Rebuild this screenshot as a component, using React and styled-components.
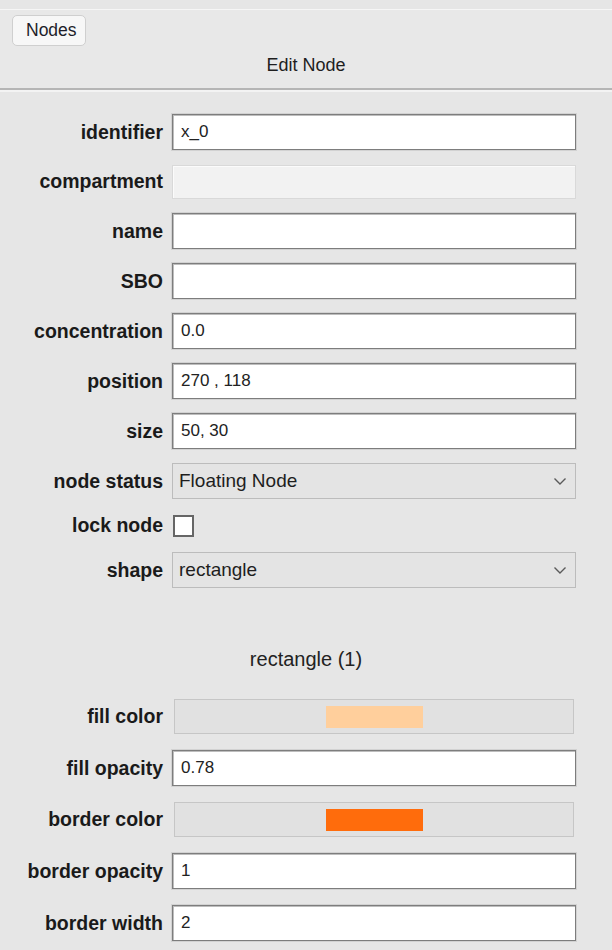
import React from "react";
import styled, { createGlobalStyle } from "styled-components";

const Global = createGlobalStyle`
  html, body {
    margin: 0;
    padding: 0;
    background: #e6e6e6;
  }
  body {
    font-family: "Liberation Sans", Arial, sans-serif;
    color: #1e1e1e;
  }
`;

const Page = styled.div`
  width: 612px;
  min-height: 950px;
  background: #e6e6e6;
  padding-top: 9px;
  box-sizing: border-box;
`;

const Header = styled.header`
  background: #e8e8e8;
  border-top: 1px solid #f6f6f6;
  border-bottom: 2px solid #b5b5b5;
  box-shadow: 0 2px 0 #f3f3f3;
  padding: 5px 12px 13px;
  display: flex;
  flex-direction: column;
`;

const TabButton = styled.button`
  align-self: flex-start;
  height: 31px;
  padding: 0 8px 0 13px;
  font-family: "Liberation Sans", Arial, sans-serif;
  font-size: 17.5px;
  color: #1e1e2a;
  background: #f7f7f7;
  border: 1px solid #cfcfcf;
  border-radius: 5px;
`;

const Title = styled.div`
  text-align: center;
  font-size: 18px;
  line-height: 20px;
  margin-top: 9px;
  color: #1e1e1e;
`;

const Form = styled.div`
  display: grid;
  grid-template-columns: 163px 404px;
  column-gap: 9px;
  row-gap: ${(p) => p.$gap}px;
  padding-top: ${(p) => p.$top}px;
`;

const Label = styled.label`
  font-weight: bold;
  font-size: 19.5px;
  text-align: right;
  color: #1a1a1a;
  align-self: center;
  white-space: nowrap;
`;

const TextInput = styled.input`
  box-sizing: border-box;
  height: 36px;
  width: 100%;
  margin: 0;
  padding: 0 8px;
  font-family: "Liberation Sans", Arial, sans-serif;
  font-size: 17px;
  color: #222;
  background: #fff;
  border: 1px solid #7d7d7d;
  box-shadow: inset 1px 1px 0 #bdbdbd, 0 0 0 1px #d2d2d2;
  outline: none;

  &:disabled {
    background: #f2f2f2;
    border: 1px solid #d9d9d9;
    box-shadow: inset 1px 1px 0 #fbfbfb;
    height: 34px;
    margin-top: 1px;
  }
`;

const Select = styled.div`
  box-sizing: border-box;
  height: 36px;
  display: flex;
  align-items: center;
  justify-content: space-between;
  padding: 0 8px 0 6px;
  font-size: 19px;
  color: #1e1e1e;
  background: #e4e4e4;
  border: 1px solid #bcbcbc;
`;

const Chevron = () => (
  <svg width="14" height="9" viewBox="0 0 14 9">
    <path d="M1.5 1.5 L7 7 L12.5 1.5" fill="none" stroke="#5a5a5a" strokeWidth="1.4" />
  </svg>
);

const CheckRow = styled.div`
  height: 25px;
  display: flex;
  align-items: center;
`;

const CheckBox = styled.span`
  box-sizing: border-box;
  width: 21px;
  height: 22px;
  background: #fff;
  border: 2px solid #666;
  margin-left: 1px;
`;

const SectionTitle = styled.div`
  text-align: center;
  font-size: 20px;
  line-height: 20px;
  margin-top: 61px;
  color: #222;
`;

const ColorField = styled.div`
  box-sizing: border-box;
  height: 35px;
  margin: 0 2px;
  display: flex;
  align-items: center;
  justify-content: center;
  background: #e1e1e1;
  border: 1px solid #c6c6c6;
`;

const Swatch = styled.span`
  width: 97px;
  height: 22px;
  margin-left: 1px;
  background: ${(p) => p.$color};
`;

const nodeFields = [
  { label: "identifier", value: "x_0" },
  { label: "compartment", value: "", disabled: true },
  { label: "name", value: "" },
  { label: "SBO", value: "" },
  { label: "concentration", value: "0.0" },
  { label: "position", value: "270 , 118" },
  { label: "size", value: "50, 30" },
];

export default function App() {
  return (
    <Page>
      <Global />
      <Header>
        <TabButton>Nodes</TabButton>
        <Title>Edit Node</Title>
      </Header>

      <Form $top={24} $gap={14}>
        {nodeFields.map((f) => (
          <React.Fragment key={f.label}>
            <Label>{f.label}</Label>
            <TextInput readOnly value={f.value} disabled={f.disabled} />
          </React.Fragment>
        ))}
        <Label>node status</Label>
        <Select>
          Floating Node
          <Chevron />
        </Select>
        <Label>lock node</Label>
        <CheckRow>
          <CheckBox />
        </CheckRow>
        <Label>shape</Label>
        <Select>
          rectangle
          <Chevron />
        </Select>
      </Form>

      <SectionTitle>rectangle (1)</SectionTitle>

      <Form $top={30} $gap={16}>
        <Label>fill color</Label>
        <ColorField>
          <Swatch $color="#ffcf9c" />
        </ColorField>
        <Label>fill opacity</Label>
        <TextInput readOnly value="0.78" />
        <Label>border color</Label>
        <ColorField>
          <Swatch $color="#ff6c0c" />
        </ColorField>
        <Label>border opacity</Label>
        <TextInput readOnly value="1" />
        <Label>border width</Label>
        <TextInput readOnly value="2" />
      </Form>
    </Page>
  );
}
